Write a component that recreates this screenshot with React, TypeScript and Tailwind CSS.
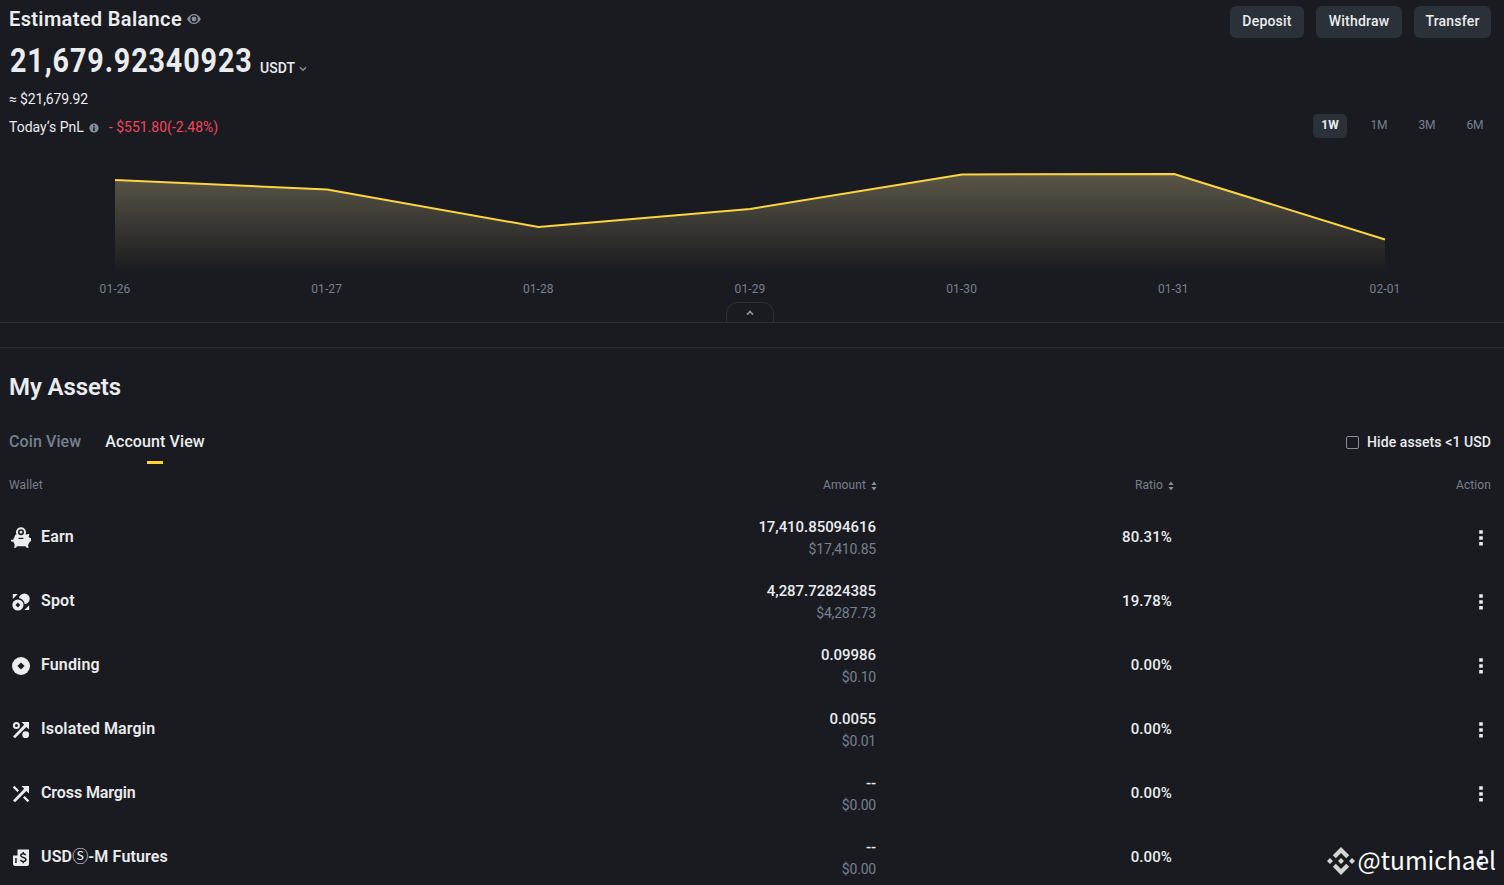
import type { ReactNode } from 'react';

interface Wallet {
  name: ReactNode;
  icon: ReactNode;
  amount: string;
  fiat: string;
  ratio: string;
}

const BG = '#1a1b20';

function EyeIcon() {
  return (
    <svg width="14" height="12" viewBox="0 0 14 12" fill="none">
      <path d="M7 1C4 1 1.800 3 0 6c1.800 3 4 5 7 5s5.200-2 7-5c-1.800-3-4-5-7-5z" fill="#848e9c" />
      <circle cx="7" cy="6" r="3.100" stroke={BG} strokeWidth="1.400" />
    </svg>
  );
}

function InfoIcon() {
  return (
    <svg width="10" height="10" viewBox="0 0 10 10">
      <circle cx="5" cy="5" r="4.600" fill="#848e9c" />
      <path d="M4.200 2h1.600v1.400H4.200zM4.200 4.300h1.600V8H4.200z" fill={BG} />
    </svg>
  );
}

function SortIcon() {
  return (
    <svg width="6" height="10" viewBox="0 0 6 10" fill="#848e9c">
      <path d="M3 0.500L5.600 4H0.400zM3 9.500L5.600 6H0.400z" />
    </svg>
  );
}

function MoreIcon() {
  return (
    <svg width="20" height="24" viewBox="0 0 20 24" fill="#eaecef">
      <path d="M8.200 4.200h3.600v3.600H8.200zM8.200 10.200h3.600v3.600H8.200zM8.200 16h3.600v3.600H8.200z" />
    </svg>
  );
}

function IconBox({ children }: { children: ReactNode }) {
  return (
    <svg width="24" height="24" viewBox="0 0 24 24" fill="#eaecef">
      {children}
    </svg>
  );
}

const earnIcon = (
  <IconBox>
    <path d="M6.500 8.600H16L20.400 8l-.8 3 1.400 1h1v3.500h-1l-2 3.500 .6 2.700h-2L16.500 20.200H8L7 21.700H5l.8-2.800L4.300 15.500H2v-1.800h2.200z" />
    <circle cx="12" cy="6.200" r="5" />
    <circle cx="12" cy="6.200" r="2.200" stroke={BG} strokeWidth="1.600" fill="#eaecef" />
    <path d="M9.600 11.800h4.800V13H9.600z" fill={BG} />
  </IconBox>
);

const spotIcon = (
  <IconBox>
    <path d="M3.800 4h5l-5 5zM20.200 20h-4.800l4.800-4.800z" />
    <circle cx="15.300" cy="8.800" r="5.400" />
    <circle cx="8.900" cy="15" r="6.900" fill={BG} />
    <circle cx="8.900" cy="15" r="5.600" />
    <path d="M8.900 12.600l2.400 2.400-2.400 2.400L6.500 15z" fill={BG} />
  </IconBox>
);

const fundingIcon = (
  <IconBox>
    <circle cx="12" cy="12" r="9" />
    <path d="M12 8.400l3.600 3.600-3.600 3.600L8.400 12z" fill={BG} />
  </IconBox>
);

const isolatedIcon = (
  <IconBox>
    <circle cx="7.400" cy="7.400" r="2.500" fill="none" stroke="#eaecef" strokeWidth="2" />
    <path d="M12.500 4H20v7.500l-2.600-2.600L6 20.200 4 18.400 15.200 6.700z" />
    <circle cx="16.700" cy="16.700" r="3.400" />
  </IconBox>
);

const crossIcon = (
  <IconBox>
    <path d="M12.500 4H20v7.500l-2.600-2.600L6 20.200 4 18.400 15.200 6.700z" />
    <path d="M4.600 4.600l4.600 4.600M14.800 14.800l4.600 4.600" stroke="#eaecef" strokeWidth="2.300" />
  </IconBox>
);

const futuresIcon = (
  <IconBox>
    <path d="M8.500 3.500H20V18a2 2 0 0 1-2 2H6a2 2 0 0 1-2-2V9.500h4.500z" />
    <path d="M6.200 12h1.500v5H6.200z" fill={BG} />
    <path d="M16.700 9.200c-.4-1-1.300-1.500-2.500-1.500-1.300 0-2.400.7-2.400 1.900 0 2.600 5.100 1.300 5.100 4 0 1.300-1.200 2-2.600 2s-2.500-.6-2.800-1.800M14.200 6v1.700M14.200 15.500v1.800" fill="none" stroke={BG} strokeWidth="1.500" />
  </IconBox>
);

const wallets: Wallet[] = [
  { name: 'Earn', icon: earnIcon, amount: '17,410.85094616', fiat: '$17,410.85', ratio: '80.31%' },
  { name: 'Spot', icon: spotIcon, amount: '4,287.72824385', fiat: '$4,287.73', ratio: '19.78%' },
  { name: 'Funding', icon: fundingIcon, amount: '0.09986', fiat: '$0.10', ratio: '0.00%' },
  { name: 'Isolated Margin', icon: isolatedIcon, amount: '0.0055', fiat: '$0.01', ratio: '0.00%' },
  {
    name: <span className="tracking-[-0.1px]">Cross Margin</span>,
    icon: crossIcon,
    amount: '--',
    fiat: '$0.00',
    ratio: '0.00%',
  },
  {
    name: (
      <>
        USD<span className="font-['Noto_Sans_CJK_SC',sans-serif] leading-none font-normal">Ⓢ</span>-M Futures
      </>
    ),
    icon: futuresIcon,
    amount: '--',
    fiat: '$0.00',
    ratio: '0.00%',
  },
];

const dates = ['01-26', '01-27', '01-28', '01-29', '01-30', '01-31', '02-01'];
const line = 'M115 20L327 29.500L538.500 67L750 49L962 14.500L1174 14L1385 79.500';

function BalanceChart() {
  return (
    <div>
      <svg className="block" width="1504" height="121" viewBox="0 0 1504 121">
        <defs>
          <linearGradient id="fill" x1="0" y1="14" x2="0" y2="112" gradientUnits="userSpaceOnUse">
            <stop offset="0" stopColor="#f0dfa0" stopOpacity="0.300" />
            <stop offset="1" stopColor="#f0dfa0" stopOpacity="0" />
          </linearGradient>
        </defs>
        <path d={`${line}V112H115z`} fill="url(#fill)" />
        <path d={line} fill="none" stroke="#fcd540" strokeWidth="2" strokeLinejoin="round" />
      </svg>
      <div className="flex h-4 justify-between pr-[99px] pl-[95px] text-xs leading-4 tracking-[0.1px] text-[#76808f]">
        {dates.map((d) => (
          <span key={d} className="w-10 text-center">{d}</span>
        ))}
      </div>
    </div>
  );
}

function WalletRow({ wallet }: { wallet: Wallet }) {
  return (
    <div className="flex h-16 items-center">
      <div className="flex w-[567px] items-center gap-2">
        <div className="pt-0.5">{wallet.icon}</div>
        <span className="h-6 text-base leading-6 font-semibold tracking-[0.15px]">{wallet.name}</span>
      </div>
      <div className="w-[300px] pt-0.5 text-right">
        <div className="h-[22px] text-[15px] leading-[22px] font-medium tracking-[-0.05px]">{wallet.amount}</div>
        <div className="h-[22px] text-sm leading-[22px] tracking-[-0.2px] text-[#76808f]">{wallet.fiat}</div>
      </div>
      <div className="w-[296px] text-right text-[15px] font-medium tracking-[0.1px]">{wallet.ratio}</div>
      <div className="flex flex-1 justify-end pt-0.5">
        <MoreIcon />
      </div>
    </div>
  );
}

function Watermark() {
  return (
    <div className="absolute right-2 bottom-1 flex h-10 items-center gap-[3px] font-['Noto_Sans_CJK_SC',sans-serif] text-[24.5px] text-white">
      <svg width="28" height="28" viewBox="0 0 28 28" fill="#d4d4d4">
        <path d="M14 0l8.200 8.200-3 3L14 6l-5.200 5.200-3-3zM14 28l8.200-8.200-3-3L14 22l-5.200-5.200-3 3zM3 11l3 3-3 3-3-3zM25 11l3 3-3 3-3-3zM14 11l3 3-3 3-3-3z" />
      </svg>
      <span className="pb-0.5">@tumichael</span>
    </div>
  );
}

export default function App() {
  return (
    <div className="relative h-[885px] w-[1504px] overflow-hidden bg-[#1a1b20] font-[Roboto,sans-serif] text-[#eaecef]">
      <header className="flex h-[160px] justify-between pr-[13px] pl-[9px]">
        <div className="pt-[5px]">
          <div className="flex h-7 items-center gap-[5px]">
            <h1 className="text-xl font-semibold tracking-[0.35px]">Estimated Balance</h1>
            <EyeIcon />
          </div>
          <div className="mt-[7px] flex h-10 items-center">
            <div className="w-[242px] pt-px pl-px">
              <span className="inline-block origin-left scale-x-[0.87] text-[33px] font-bold tracking-[1px] whitespace-nowrap">
                21,679.92340923
              </span>
            </div>
            <span className="mt-4 ml-[9px] text-sm font-medium">USDT</span>
            <svg className="mt-[18px] ml-1" width="8" height="6" viewBox="0 0 8 6" fill="none">
              <path d="M1 1.200l3 3 3-3" stroke="#848e9c" strokeWidth="1.600" />
            </svg>
          </div>
          <div className="mt-[9px] h-5 text-sm leading-5 tracking-[-0.15px]">≈ $21,679.92</div>
          <div className="mt-2 flex h-5 items-center text-sm leading-5">
            <span>Today‘s PnL</span>
            <span className="ml-[5px] pt-px">
              <InfoIcon />
            </span>
            <span className="ml-2.5 text-[#f6465d]">- $551.80(-2.48%)</span>
          </div>
        </div>
        <div className="flex flex-col items-end justify-between pt-1.5 pb-[22px]">
          <div className="flex gap-3 text-sm font-medium tracking-[0.2px]">
            <button className="h-8 w-[74px] rounded-md bg-[#2b3139] pb-0.5">Deposit</button>
            <button className="h-8 w-[86px] rounded-md bg-[#2b3139] pb-0.5">Withdraw</button>
            <button className="h-8 w-[77px] rounded-md bg-[#2b3139] pb-0.5">Transfer</button>
          </div>
          <div className="flex gap-3.5 text-xs text-[#76808f]">
            <button className="h-6 w-[34px] rounded-[5px] bg-[#2b3139] pb-0.5 font-bold text-[#eaecef]">1W</button>
            <button className="h-6 w-[34px] pb-0.5 pl-0.5">1M</button>
            <button className="h-6 w-[34px] pb-0.5 pl-0.5">3M</button>
            <button className="h-6 w-[34px] pb-0.5 pl-0.5">6M</button>
          </div>
        </div>
      </header>

      <BalanceChart />

      <div className="mt-[5px] flex h-[21px] justify-center border-b border-[#2b3139] pr-1">
        <div className="flex w-12 items-center justify-center rounded-t-xl border border-b-0 border-[#2b3139]">
          <svg width="8" height="6" viewBox="0 0 8 6" fill="none">
            <path d="M1 4.600l3-3 3 3" stroke="#848e9c" strokeWidth="1.800" />
          </svg>
        </div>
      </div>
      <div className="h-[25px] border-b border-[#2b2e35]" />

      <main className="pr-[13px] pl-[9px]">
        <h2 className="mt-[23px] h-8 text-2xl leading-8 font-semibold tracking-[-0.1px]">My Assets</h2>
        <div className="mt-[26px] flex h-9 justify-between">
          <div className="flex gap-6 pt-px text-base leading-6 font-medium tracking-[0.1px]">
            <span className="text-[#76808f]">Coin View</span>
            <div className="flex flex-col items-center">
              <span>Account View</span>
              <span className="mt-[7px] h-[3px] w-4 bg-[#fcd535]" />
            </div>
          </div>
          <label className="flex h-[26px] items-center gap-2 text-sm font-medium tracking-[0.08px]">
            <span className="h-[13px] w-[13px] rounded-xs border border-[#848e9c]" />
            Hide assets &lt;1 USD
          </label>
        </div>
        <div className="mt-2.5 flex h-5 items-center text-xs tracking-[0.1px] text-[#76808f]">
          <span className="w-[567px]">Wallet</span>
          <span className="flex w-[301px] items-center justify-end gap-[5px]">
            Amount
            <span className="pt-0.5">
              <SortIcon />
            </span>
          </span>
          <span className="flex w-[297px] items-center justify-end gap-[5px]">
            Ratio
            <span className="pt-0.5">
              <SortIcon />
            </span>
          </span>
          <span className="flex-1 text-right">Action</span>
        </div>
        <div className="mt-2.5">
          {wallets.map((w, i) => (
            <WalletRow key={i} wallet={w} />
          ))}
        </div>
      </main>

      <Watermark />
    </div>
  );
}
